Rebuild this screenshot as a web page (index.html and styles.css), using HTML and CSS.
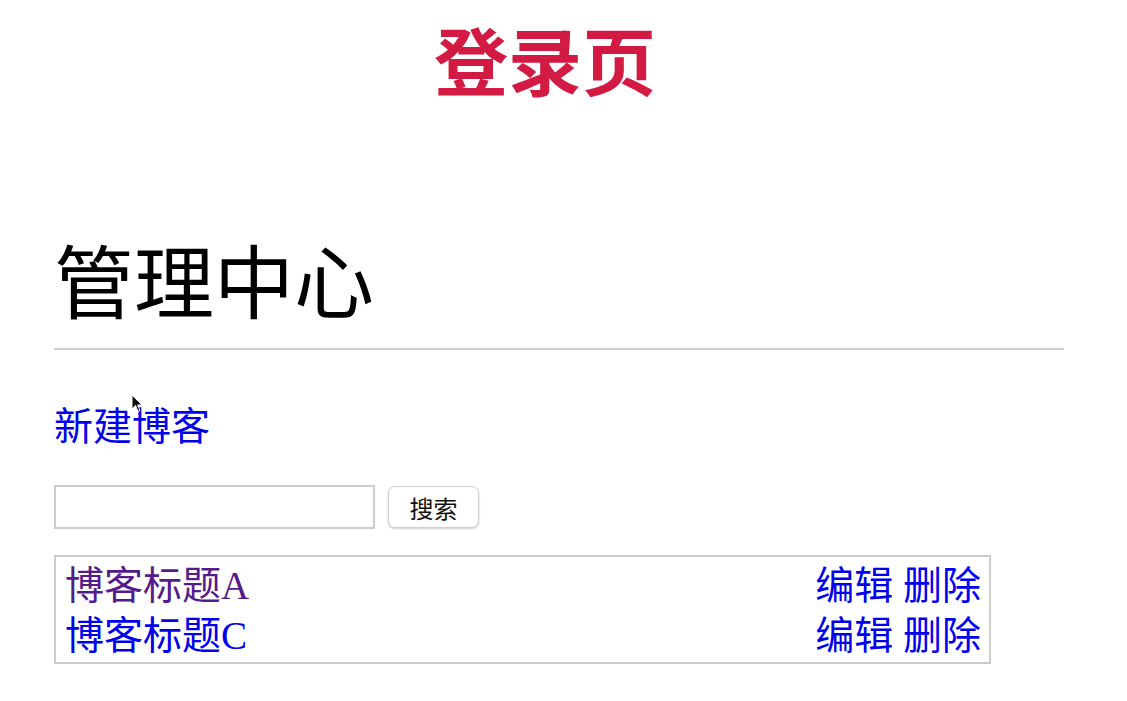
FILE: index.html
```html
<!DOCTYPE html>
<html lang="zh-CN">
<head>
<meta charset="utf-8">
<title>管理中心</title>
<link rel="stylesheet" href="styles.css">
</head>
<body>
<div class="banner">登录页</div>
<main class="page">
  <h1 class="heading">管理中心</h1>
  <hr class="rule">
  <a class="new-link" href="#">新建博客</a>
  <form class="search">
    <input class="search-input" type="text">
    <button class="search-btn" type="button">搜索</button>
  </form>
  <div class="list">
    <div class="row">
      <a class="post visited" href="#">博客标题A</a>
      <span class="actions"><a href="#">编辑</a> <a href="#">删除</a></span>
    </div>
    <div class="row">
      <a class="post" href="#">博客标题C</a>
      <span class="actions"><a href="#">编辑</a> <a href="#">删除</a></span>
    </div>
  </div>
</main>
<svg class="cursor" width="12" height="20" viewBox="0 0 12 20" aria-hidden="true">
  <path d="M1 1 L1 15 L4.5 11.5 L7 17.5 L9 16.6 L6.6 11 L11 11 Z" fill="#111" stroke="#fff" stroke-width="1"/>
</svg>
</body>
</html>
```

FILE: styles.css
```css
html, body {
  margin: 0;
  padding: 0;
  background: #fff;
}
body {
  font-family: "Liberation Serif", "Noto Sans CJK SC", serif;
  color: #000;
  position: relative;
}
.banner {
  text-align: center;
  font-family: "Noto Sans CJK SC", sans-serif;
  font-weight: 700;
  font-size: 74px;
  line-height: 1;
  color: #d21a42;
  padding-top: 21px;
  padding-right: 37px;
}
.page {
  margin-left: 54px;
  width: 1010px;
  display: flex;
  flex-direction: column;
  align-items: flex-start;
}
.heading {
  font-weight: normal;
  font-size: 80px;
  line-height: 1;
  margin: 150px 0 0 0;
}
.rule {
  align-self: stretch;
  margin: 23px 0 0 0;
  border: 0;
  border-top: 2px solid #cfcfcf;
  height: 0;
}
a {
  color: #0000ee;
  text-decoration: none;
}
.new-link {
  font-size: 39px;
  line-height: 1;
  margin-top: 57px;
}
.search {
  display: flex;
  align-items: center;
  gap: 13px;
  margin-top: 39px;
}
.search-input {
  box-sizing: border-box;
  width: 321px;
  height: 44px;
  border: 2px solid #cdcdcd;
  margin: 0;
  background: #fff;
}
.search-btn {
  box-sizing: border-box;
  width: 91px;
  height: 42px;
  border: 1px solid #cfcfcf;
  border-radius: 7px;
  background: #fff;
  box-shadow: 0 1px 2px rgba(0,0,0,0.2);
  font-family: "Noto Sans CJK SC", sans-serif;
  font-size: 24px;
  color: #111;
  padding: 0;
}
.list {
  box-sizing: border-box;
  width: 937px;
  margin-top: 26px;
  border: 2px solid #cccccc;
  padding: 4px 8px 1px 9px;
  display: flex;
  flex-direction: column;
}
.row {
  display: flex;
  justify-content: space-between;
  font-size: 39px;
  line-height: 50px;
}
.post.visited {
  color: #551a8b;
}
.actions a {
  color: #0000ee;
}
.cursor {
  position: absolute;
  left: 131px;
  top: 394px;
}
```
